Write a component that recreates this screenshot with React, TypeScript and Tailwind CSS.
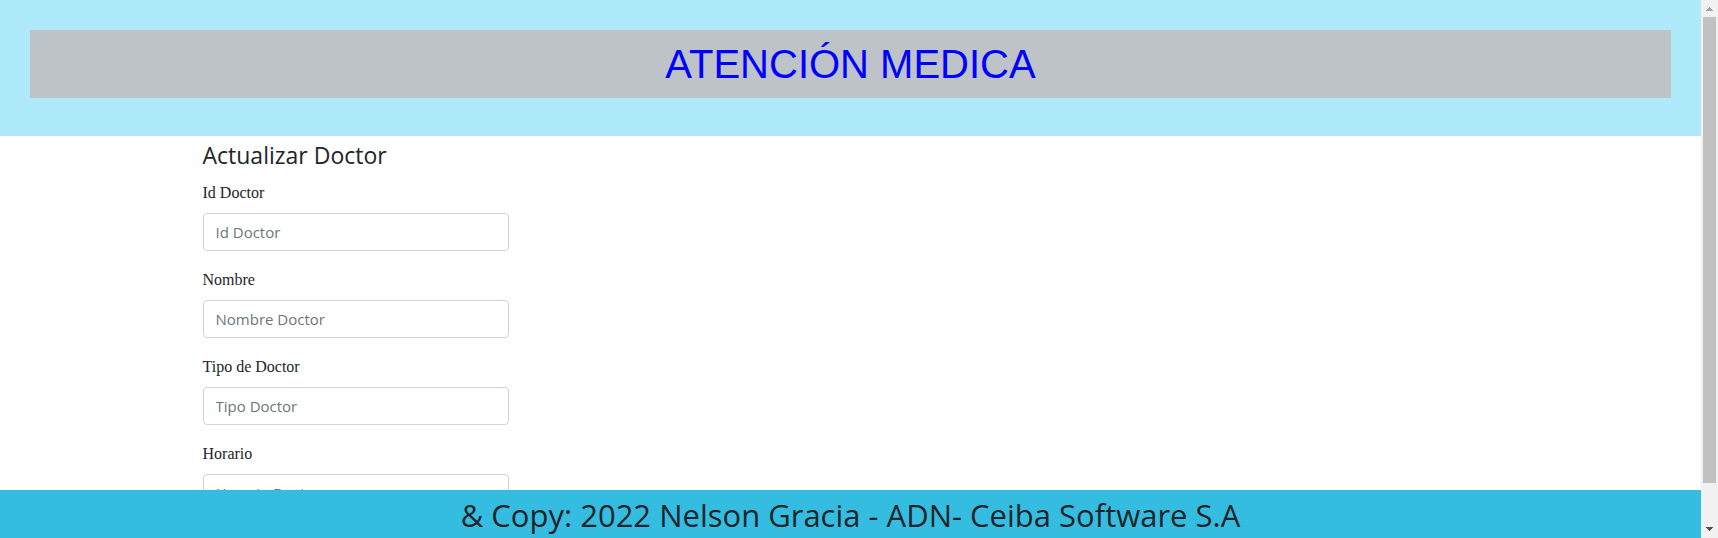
const fields = [
  { id: "id", label: "Id Doctor", placeholder: "Id Doctor" },
  { id: "nombre", label: "Nombre", placeholder: "Nombre Doctor" },
  { id: "tipo", label: "Tipo de Doctor", placeholder: "Tipo Doctor" },
  { id: "horario", label: "Horario", placeholder: "Horario Doctor" },
];

function Header() {
  return (
    <header className="shrink-0 bg-[#aeeafa] px-[30px] pt-[30px] pb-[38px]">
      <h1 className="bg-[#bdc3c7] py-[10px] text-center font-['Liberation_Sans',Arial,sans-serif] text-[40px] leading-[48px] text-[#0000ff]">
        ATENCIÓN MEDICA
      </h1>
    </header>
  );
}

function DoctorForm() {
  return (
    <form className="mx-auto w-full max-w-[1320px] px-3 pt-1">
      <h4 className="mb-[11px] text-[23px] leading-[30px]">Actualizar Doctor</h4>
      <div className="flex w-[306px] flex-col gap-[17px]">
        {fields.map((field) => (
          <div key={field.id} className="flex flex-col gap-2">
            <label
              htmlFor={field.id}
              className="font-['Liberation_Serif','Times_New_Roman',serif] text-base leading-6"
            >
              {field.label}
            </label>
            <input
              id={field.id}
              type="text"
              placeholder={field.placeholder}
              className="h-[38px] w-full rounded border border-[#ced4da] bg-white px-3 text-[15px] leading-6 placeholder:text-[#6c757d]"
            />
          </div>
        ))}
      </div>
    </form>
  );
}

function ScrollTrack() {
  return (
    <div aria-hidden="true" className="flex w-[17px] shrink-0 flex-col items-center bg-[#f1f1f1]">
      <svg className="h-[17px] w-[17px] shrink-0" viewBox="0 0 17 17" shapeRendering="crispEdges">
        <path d="M8 7h1v1h1v1h1v1h1v1H5v-1h1V9h1V8h1z" fill="#a3a3a3" />
      </svg>
      <div className="flex w-full flex-1 flex-col items-center">
        <div className="h-[92.5%] w-[13px] bg-[#c1c1c1]" />
      </div>
      <svg className="h-[17px] w-[17px] shrink-0" viewBox="0 0 17 17" shapeRendering="crispEdges">
        <path d="M5 6h7v1h-1v1h-1v1H9v1H8V9H7V8H6V7H5z" fill="#505050" />
      </svg>
    </div>
  );
}

export default function App() {
  return (
    <div className="flex h-screen bg-white font-['Open_Sans','Segoe_UI',sans-serif] text-[#212529]">
      <div className="flex min-w-0 flex-1 flex-col">
        <Header />
        <main className="min-h-0 flex-1 overflow-hidden">
          <DoctorForm />
        </main>
        <footer className="shrink-0 bg-[#34bde1] pt-[2px] text-center">
          <h2 className="text-[31px] leading-[46px]">
            &amp; Copy: 2022 Nelson Gracia - ADN- Ceiba Software S.A
          </h2>
        </footer>
      </div>
      <ScrollTrack />
    </div>
  );
}
